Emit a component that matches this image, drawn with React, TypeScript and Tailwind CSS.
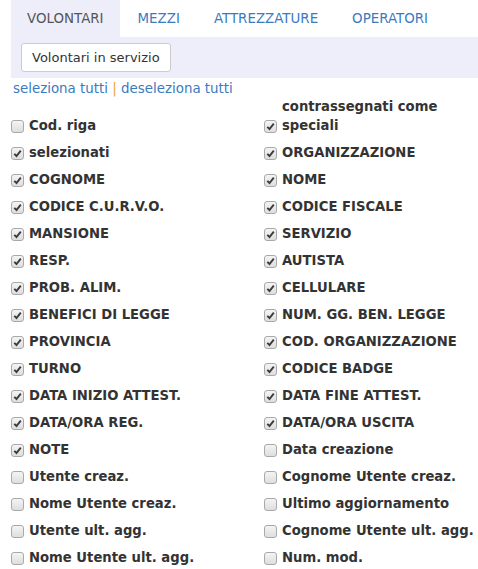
import React from "react";

const Box = ({ checked }: { checked: boolean }) => (
  <span className="mr-[5px] mb-[2px] inline-flex h-[13px] w-[13px] shrink-0 items-center justify-center rounded-[3px] border border-[#a9a9a9] bg-gradient-to-b from-[#f4f4f4] to-[#dedede]">
    {checked && (
      <svg width="9" height="9" viewBox="0 0 9 9">
        <path d="M1.3 4.8 L3.5 7 L7.8 1.6" fill="none" stroke="#3b3b3b" strokeWidth="1.9" />
      </svg>
    )}
  </span>
);

const left: [string, boolean][] = [
  ["Cod. riga", false],
  ["selezionati", true],
  ["COGNOME", true],
  ["CODICE C.U.R.V.O.", true],
  ["MANSIONE", true],
  ["RESP.", true],
  ["PROB. ALIM.", true],
  ["BENEFICI DI LEGGE", true],
  ["PROVINCIA", true],
  ["TURNO", true],
  ["DATA INIZIO ATTEST.", true],
  ["DATA/ORA REG.", true],
  ["NOTE", true],
  ["Utente creaz.", false],
  ["Nome Utente creaz.", false],
  ["Utente ult. agg.", false],
  ["Nome Utente ult. agg.", false],
];

const right: [string, boolean][] = [
  ["contrassegnati come speciali", true],
  ["ORGANIZZAZIONE", true],
  ["NOME", true],
  ["CODICE FISCALE", true],
  ["SERVIZIO", true],
  ["AUTISTA", true],
  ["CELLULARE", true],
  ["NUM. GG. BEN. LEGGE", true],
  ["COD. ORGANIZZAZIONE", true],
  ["CODICE BADGE", true],
  ["DATA FINE ATTEST.", true],
  ["DATA/ORA USCITA", true],
  ["Data creazione", false],
  ["Cognome Utente creaz.", false],
  ["Ultimo aggiornamento", false],
  ["Cognome Utente ult. agg.", false],
  ["Num. mod.", false],
];

const tabs = ["VOLONTARI", "MEZZI", "ATTREZZATURE", "OPERATORI"];

export default function App() {
  const rows = left.map((l, i) => [l, right[i]]);
  return (
    <div className="min-h-screen overflow-hidden bg-white font-['DejaVu_Sans',Verdana,sans-serif] text-[13.4px] leading-[19px] text-[#333]">
      {/* Tabs */}
      <div className="ml-[11px] flex h-[37px]">
        {tabs.map((t, i) => (
          <div
            key={t}
            className={`mr-[2px] flex items-center px-[16px] pb-[1px] ${
              i === 0 ? "bg-[#eeeefa] text-[#555]" : "text-[#3a7bbf]"
            }`}
          >
            {t}
          </div>
        ))}
      </div>
      <div className="ml-[11px] h-[41px] bg-[#eeeefa] pl-[10px] pt-[6px]">
        <button className="h-[29px] rounded-[3px] border border-[#ccc] bg-white px-[10px] text-[13px] text-[#333]">
          Volontari in servizio
        </button>
      </div>

      <div className="ml-[13px] mt-[1px] h-[19px] text-[#3a7bbf]">
        seleziona tutti <span className="text-[#e8a33c]">|</span> deseleziona tutti
      </div>

      <div className="mt-[11px] grid grid-cols-[253px_1fr] pl-[11px] text-[13.2px] font-bold">
        {rows.map(([l, r], i) => (
          <React.Fragment key={i}>
            <div className="flex h-[27px] items-end">
              <div className="flex items-end pb-[1px]">
                <Box checked={l[1]} />
                <span className="whitespace-nowrap">{l[0]}</span>
              </div>
            </div>
            <div className="flex h-[27px] items-end">
              <div className="flex items-end pb-[1px]">
                <Box checked={r[1]} />
                <span className={i === 0 ? "w-[170px]" : "whitespace-nowrap"}>{r[0]}</span>
              </div>
            </div>
          </React.Fragment>
        ))}
      </div>
    </div>
  );
}
